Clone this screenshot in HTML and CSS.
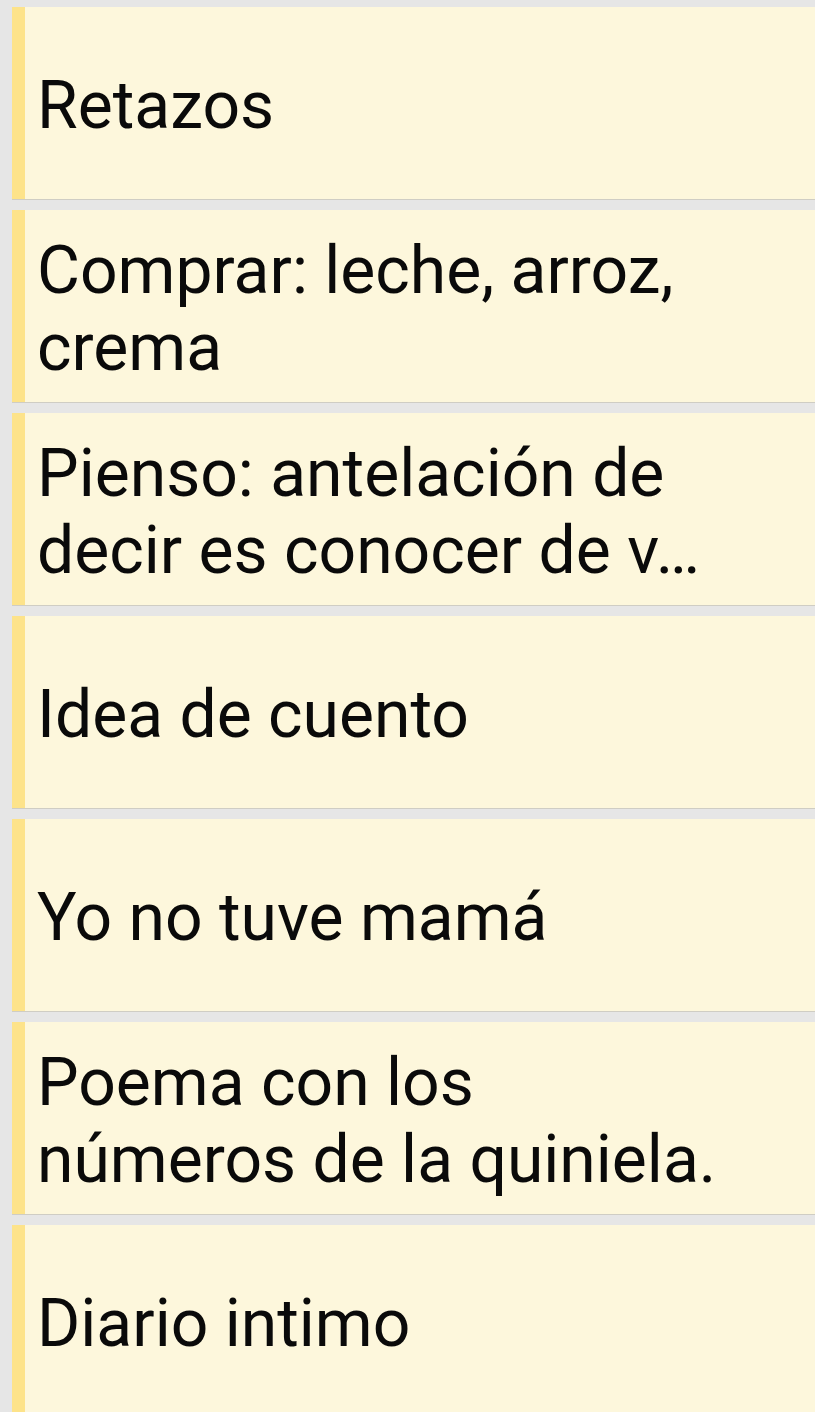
FILE: index.html
```html
<!DOCTYPE html>
<html lang="es">
<head>
<meta charset="utf-8">
<link rel="stylesheet" href="styles.css">
</head>
<body>
<div class="list">
  <div class="note"><div class="bar"></div><div class="text">Retazos</div></div>
  <div class="note"><div class="bar"></div><div class="text">Comprar: leche, arroz,<br>crema</div></div>
  <div class="note"><div class="bar"></div><div class="text">Pienso: antelación de<br>decir es conocer de v…</div></div>
  <div class="note"><div class="bar"></div><div class="text">Idea de cuento</div></div>
  <div class="note"><div class="bar"></div><div class="text">Yo no tuve mamá</div></div>
  <div class="note"><div class="bar"></div><div class="text">Poema con los<br>números de la quiniela.</div></div>
  <div class="note"><div class="bar"></div><div class="text">Diario intimo</div></div>
</div>
</body>
</html>
```
FILE: styles.css
```css
html, body {
  margin: 0;
  padding: 0;
  background: #e6e6e6;
  overflow: hidden;
}
.list {
  display: flex;
  flex-direction: column;
  gap: 10px;
  padding: 7px 0 0 12px;
}
.note {
  display: flex;
  height: 192px;
  background: #fdf7dc;
  border-bottom: 1px solid #cfcdc4;
}
.bar {
  width: 13px;
  flex: none;
  background: #fde38a;
}
.text {
  display: flex;
  align-items: center;
  padding: 5px 0 0 12px;
  font-family: Roboto, "Noto Sans", sans-serif;
  font-size: 66px;
  line-height: 77px;
  color: #0a0a0a;
}
```
